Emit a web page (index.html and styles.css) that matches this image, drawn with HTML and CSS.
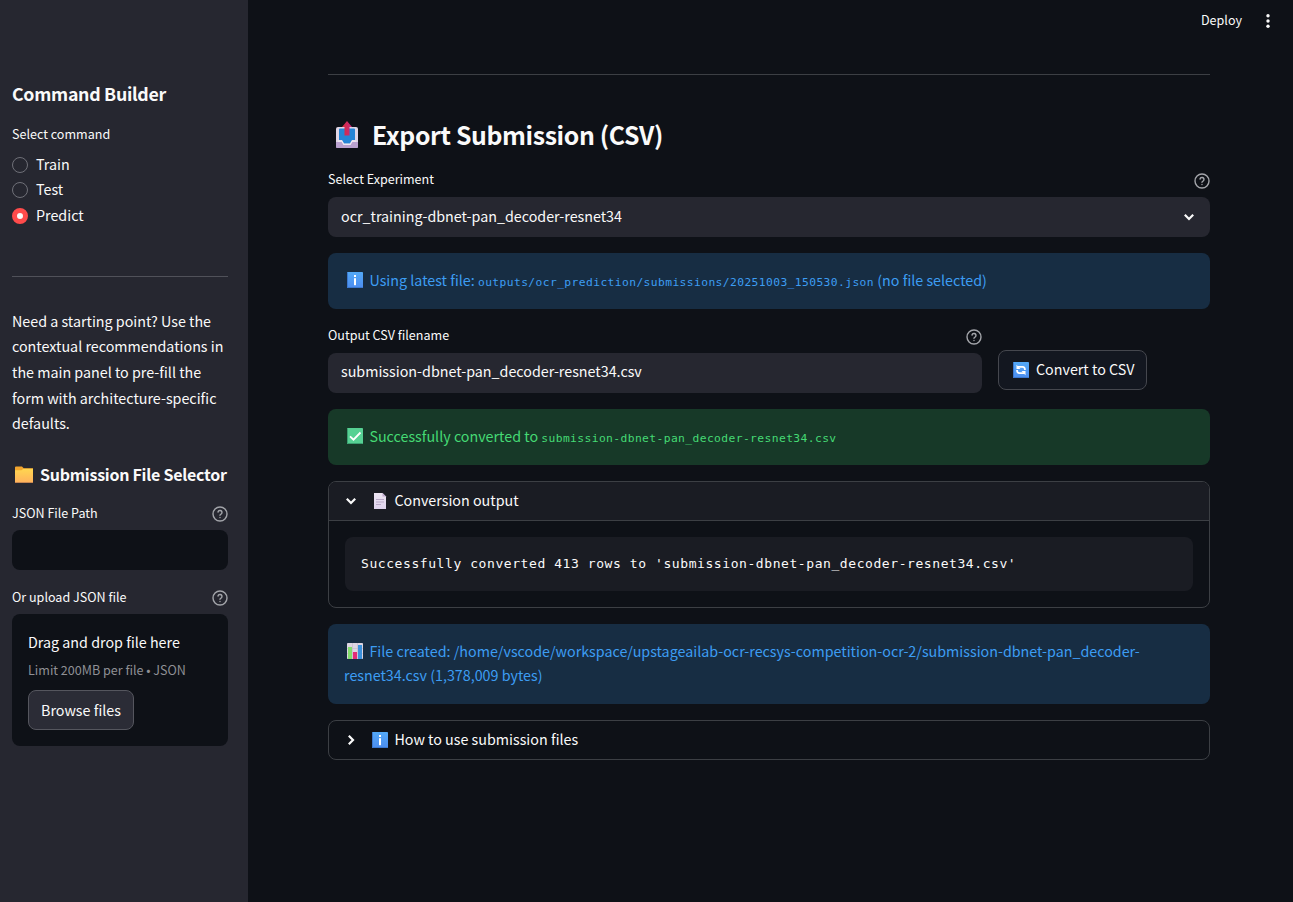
FILE: index.html
```html
<!DOCTYPE html>
<html lang="en">
<head>
<meta charset="utf-8">
<title>Command Builder</title>
<link rel="stylesheet" href="styles.css">
</head>
<body>
<svg class="defs" width="0" height="0" aria-hidden="true">
  <defs>
    <linearGradient id="blue" x1="0" y1="0" x2="0" y2="1"><stop offset="0" stop-color="#53a9f7"/><stop offset="1" stop-color="#4c8df0"/></linearGradient>
    <linearGradient id="gold" x1="0" y1="0" x2="0" y2="1"><stop offset="0" stop-color="#ffd650"/><stop offset="1" stop-color="#ffb35c"/></linearGradient>
    <linearGradient id="red" x1="0" y1="0" x2="1" y2="0"><stop offset="0" stop-color="#d92b3a"/><stop offset="1" stop-color="#c52a80"/></linearGradient>
    <linearGradient id="lilac" x1="0" y1="0" x2="0" y2="1"><stop offset="0" stop-color="#eee5f3"/><stop offset="1" stop-color="#ded3ec"/></linearGradient>
    <symbol id="help" viewBox="0 0 24 24"><g fill="none" stroke="currentColor" stroke-width="2.1" stroke-linecap="round" stroke-linejoin="round"><circle cx="12" cy="12" r="10.5"/><path d="M9 9a3 3 0 0 1 5.9 1c0 2-2.9 2.5-2.9 4M12 17.3v.1"/></g></symbol>
    <symbol id="chevron" viewBox="0 0 12 12"><path d="M1.8 3.8 6 8l4.200-4.200" fill="none" stroke="currentColor" stroke-width="2.200"/></symbol>
    <symbol id="info" viewBox="0 0 16 16"><rect width="16" height="16" rx=".8" fill="url(#blue)"/><path d="M.5 .5v15h15" fill="none" stroke="#3b78cf" stroke-width="1"/><rect x="7" y="3" width="2" height="2" fill="#fff"/><rect x="7" y="6.200" width="2" height="7" fill="#fff"/></symbol>
  </defs>
</svg>
<div class="app">
  <aside class="sidebar">
    <h2 class="side-title">Command Builder</h2>
    <div class="label side-label">Select command</div>
    <div class="radios">
      <div class="radio"><span class="dot"></span><span class="text">Train</span></div>
      <div class="radio"><span class="dot"></span><span class="text">Test</span></div>
      <div class="radio"><span class="dot dot-on"></span><span class="text">Predict</span></div>
    </div>
    <hr class="side-rule">
    <p class="tip">Need a starting point? Use the<br>contextual recommendations in<br>the main panel to pre-fill the<br>form with architecture-specific<br>defaults.</p>
    <h3 class="side-heading">
      <svg class="folder" viewBox="0 0 18 17"><path d="M0 1.500Q0 .5 1 .5h6l1.700 1.700H18V17H0z" fill="#f2a52e"/><path d="M0 4.200h6.500L8.500 2.800H18V16.200H0z" fill="url(#gold)"/><path d="M0 16.500h18" stroke="#c98852"/></svg>
      <span>Submission File Selector</span>
    </h3>
    <div class="label"><span>JSON File Path</span><svg class="help"><use href="#help"/></svg></div>
    <div class="input side-input"></div>
    <div class="label"><span>Or upload JSON file</span><svg class="help"><use href="#help"/></svg></div>
    <div class="dropzone">
      <div class="drop-title">Drag and drop file here</div>
      <div class="drop-limit">Limit 200MB per file • JSON</div>
      <button class="button browse">Browse files</button>
    </div>
  </aside>
  <main class="main">
    <header class="toolbar">
      <span class="text">Deploy</span>
      <svg class="menu" viewBox="0 0 4 16"><g fill="#fafafa"><circle cx="2" cy="2.800" r="1.700"/><circle cx="2" cy="8" r="1.700"/><circle cx="2" cy="13.200" r="1.700"/></g></svg>
    </header>
    <div class="content">
      <hr class="rule">
      <h1 class="title">
        <svg class="outbox" viewBox="0 0 24 28"><rect x="1" y="6" width="22" height="21" rx="2" fill="#e0d6e6"/><path d="M1 21h6l2 3h6l2-3h6v5q0 1-1 1H2q-1 0-1-1z" fill="#b9a1cf"/><path d="M4 8.500Q4 7.500 5 7.500h14q1 0 1 1V19h-3l-2 3.500H9L7 19H4z" fill="#2585d6"/><path d="M3 19.500h4l2 3.200h6l2-3.200h4v1.300h-3.500l-2 3.200H8.500l-2-3.200H3z" fill="#efe9f3"/><path d="M12 0 17 6h-2.500v8.500h-5V6H7z" fill="url(#red)"/></svg>
        <span class="text">Export Submission (CSV)</span>
      </h1>
      <div class="label"><span>Select Experiment</span><svg class="help"><use href="#help"/></svg></div>
      <div class="input"><span class="text">ocr_training-dbnet-pan_decoder-resnet34</span><svg class="chevron"><use href="#chevron"/></svg></div>
      <div class="alert alert-info"><svg class="emoji"><use href="#info"/></svg>Using latest file: <code>outputs/ocr_prediction/submissions/20251003_150530.json</code> (no file selected)</div>
      <div class="form-row">
        <div class="field">
          <div class="label"><span>Output CSV filename</span><svg class="help"><use href="#help"/></svg></div>
          <div class="input input-text">submission-dbnet-pan_decoder-resnet34.csv</div>
        </div>
        <button class="button convert">
          <svg class="emoji" viewBox="0 0 16 16"><rect width="16" height="16" rx=".8" fill="url(#blue)"/><path d="M.5 .5v15h15" fill="none" stroke="#3b78cf"/><g fill="none" stroke="#fff" stroke-width="1.700"><path d="M5 4.800H9.500Q12 4.800 12 8"/><path d="M11 11.200H6.500Q4 11.200 4 8"/></g><path d="M3.500 2.700v4.300h4zM12.500 13.300V9h-4z" fill="#fff"/></svg>
          <span class="text">Convert to CSV</span>
        </button>
      </div>
      <div class="alert alert-success"><svg class="emoji" viewBox="0 0 16 16"><rect width="16" height="16" rx=".8" fill="#56d193"/><path d="M.5 .5v15h15" fill="none" stroke="#3ba071"/><path d="M3 8.300 6.500 11.700 13.500 4.500" fill="none" stroke="#fff" stroke-width="1.800"/></svg>Successfully converted to <code>submission-dbnet-pan_decoder-resnet34.csv</code></div>
      <section class="expander">
        <div class="summary summary-open"><svg class="arrow"><use href="#chevron"/></svg><svg class="emoji" viewBox="0 0 16 16"><path d="M2 0h8.500L14 3.500V16H2z" fill="url(#lilac)"/><path d="M10.500 0v3.500H14z" fill="#bfa9cc"/><path d="M4 6.500h8M4 9h8M4 11.500h5" stroke="#b9a9c7" stroke-width="1"/></svg><span class="text">Conversion output</span></div>
        <div class="details"><pre class="output">Successfully converted 413 rows to 'submission-dbnet-pan_decoder-resnet34.csv'</pre></div>
      </section>
      <div class="alert alert-info"><svg class="emoji" viewBox="0 0 16 16"><rect width="16" height="16" rx=".8" fill="#ddd5e2"/><path d="M0 5.500h16M0 10.500h16M5.500 0v16M10.500 0v16" stroke="#c2b7cb" stroke-width=".6"/><path d="M1 4h4v12H1z" fill="#83dc6c"/><path d="M6 9h4v7H6z" fill="#e32c77"/><path d="M11 2h4v14h-4z" fill="#3c91dc"/></svg>File created: /home/vscode/workspace/upstageailab-ocr-recsys-competition-ocr-2/submission-dbnet-pan_decoder-<br>resnet34.csv (1,378,009 bytes)</div>
      <section class="expander">
        <div class="summary"><svg class="arrow arrow-closed"><use href="#chevron"/></svg><svg class="emoji"><use href="#info"/></svg><span class="text">How to use submission files</span></div>
      </section>
    </div>
  </main>
</div>
</body>
</html>
```
FILE: styles.css
```css
* { box-sizing: border-box; }
body {
  margin: 0;
  background: #0e1117;
  color: #fafafa;
  font-family: "Noto Sans CJK JP", "Noto Sans", sans-serif;
  font-size: 14.31px;
  line-height: 24px;
  white-space: nowrap;
}
h1, h2, h3, p, pre { margin: 0; }
hr { margin: 0; border: 0; height: 1px; background: #3c3f44; }
svg { display: block; flex: none; }
.defs { position: absolute; }
.text { padding-bottom: 2px; }
.app { display: flex; height: 902px; overflow: hidden; }

.sidebar { width: 248px; flex: none; padding: 80px 20px 0 12px; background: #262730; }
.side-title { height: 28px; line-height: 26px; font-size: 17.8px; font-weight: 600; letter-spacing: -.3px; }
.label { display: flex; justify-content: space-between; height: 28px; font-size: 12.55px; line-height: 21px; }
.help { width: 16px; height: 16px; margin-top: 4px; color: #a3a5aa; }
.side-label { margin-top: 16px; line-height: 19px; }
.radios { display: flex; flex-direction: column; }
.radio { display: flex; align-items: center; gap: 8px; height: 25.6px; }
.dot { width: 16px; height: 16px; border: 1px solid #6f7078; border-radius: 50%; }
.dot-on { border: 5px solid #ff4b4b; background: #fafafa; }
.side-rule { margin: 47px 0 31px; background: #505159; }
.tip { line-height: 25.6px; }
.side-heading { display: flex; align-items: center; gap: 7px; height: 24px; margin: 26px 0 16px; padding-left: 3px; font-size: 16px; font-weight: 600; letter-spacing: -.26px; }
.folder { width: 18px; height: 17px; margin-top: 2px; }
.input { display: flex; align-items: center; justify-content: space-between; height: 40px; padding: 0 15px 0 13px; border-radius: 8px; background: #262730; }
.input-text { padding-bottom: 4px; }
.side-input { margin-bottom: 16px; background: #0e1117; }
.dropzone { height: 132px; padding: 16px; border-radius: 8px; background: #0e1117; }
.drop-limit { height: 36px; padding-top: 5px; font-size: 12.55px; line-height: 21px; color: #8f9095; }
.button { display: flex; align-items: center; height: 40px; padding: 0 12px; border: 1px solid #45474e; border-radius: 8px; color: inherit; font: inherit; }
.browse { width: 106px; background: #2b2c36; border-color: #55565e; }

.main { flex: 1; }
.main .label { line-height: 19px; }
.toolbar { display: flex; align-items: center; justify-content: flex-end; gap: 24px; height: 41px; padding-right: 23px; font-size: 12.55px; }
.menu { width: 4px; height: 16px; }
.content { width: 882px; margin-left: 80px; padding-top: 33px; }
.title { display: flex; align-items: center; gap: 13px; height: 36px; margin: 42px 0 16px; padding-left: 7px; font-size: 24.8px; font-weight: 600; line-height: 36px; letter-spacing: -.36px; }
.outbox { width: 24px; height: 28px; }
.chevron { width: 12px; height: 12px; }
.alert { margin: 16px 0; padding: 15px 16px 17px; border-radius: 8px; }
.alert .emoji { display: inline-block; margin: 0 6.400px 0 3px; vertical-align: -2px; }
.alert-info { background: #172d43; color: #3d9df3; }
.alert-success { background: #173928; color: #45da74; }
.emoji { width: 16px; height: 16px; }
code { font-family: "DejaVu Sans Mono", monospace; font-size: 11.3px; letter-spacing: .4px; line-height: 1; }
.form-row { display: flex; align-items: flex-end; gap: 16px; height: 68px; }
.field { width: 654px; }
.convert { width: 149px; gap: 7px; margin-bottom: 3px; padding-left: 14px; background: #131720; }
.expander { border: 1px solid #3c3f44; border-radius: 8px; overflow: hidden; }
.summary { display: flex; align-items: center; height: 38px; padding-left: 16px; }
.summary-open { height: 39px; border-bottom: 1px solid #3c3f44; background: #1a1c23; }
.arrow { width: 12px; height: 12px; margin-right: 15px; }
.arrow-closed { transform: rotate(-90deg); }
.summary .emoji { margin-right: 6.400px; }
.details { padding: 16px; }
.output { height: 54px; padding: 15px 16px; border-radius: 8px; background: #1a1c23; font-family: "DejaVu Sans Mono", monospace; font-size: 13px; letter-spacing: .574px; line-height: 24px; }
```
